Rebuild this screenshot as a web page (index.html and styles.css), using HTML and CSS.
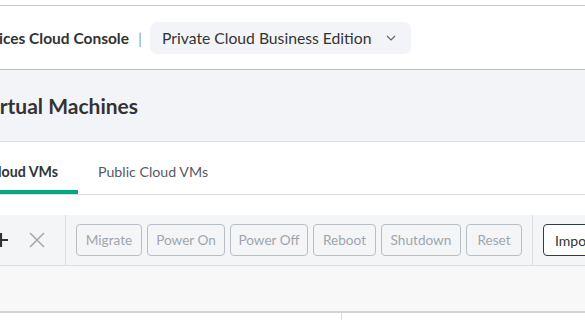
FILE: index.html
```html
<!DOCTYPE html>
<html lang="en">
<head>
<meta charset="utf-8">
<title>Virtual Machines</title>
<link rel="stylesheet" href="styles.css">
</head>
<body>
<div class="topgap"></div>
<header class="appbar">
  <div class="brand"><span>Data Services Cloud Console</span></div>
  <span class="sep">|</span>
  <button class="select">
    <span>Private Cloud Business Edition</span>
    <svg class="chev" width="10" height="6" viewBox="0 0 10 6"><path d="M1 1l4 4 4-4" fill="none" stroke="#666" stroke-width="1.2"/></svg>
  </button>
</header>
<section class="pagehead">
  <div class="title"><h1>Virtual Machines</h1></div>
</section>
<nav class="tabs">
  <a class="tab active"><span>Private Cloud VMs</span></a>
  <a class="tab">Public Cloud VMs</a>
</nav>
<div class="spacer"></div>
<div class="toolbar">
  <div class="icons">
    <svg class="plus" width="16" height="16" viewBox="0 0 16 16"><path d="M8 1v14M1 8h14" stroke="#2f3438" stroke-width="2.2" fill="none"/></svg>
    <svg class="close" width="16" height="16" viewBox="0 0 16 16"><path d="M1 1l14 14M15 1L1 15" stroke="#a4a9ae" stroke-width="1.6" fill="none"/></svg>
  </div>
  <div class="actions">
    <button class="btn" style="width:66px">Migrate</button>
    <button class="btn" style="width:78px">Power On</button>
    <button class="btn" style="width:78px">Power Off</button>
    <button class="btn" style="width:63px">Reboot</button>
    <button class="btn" style="width:80px">Shutdown</button>
    <button class="btn" style="width:56px">Reset</button>
  </div>
  <div class="more">
    <button class="import">Import</button>
  </div>
</div>
<div class="filler"></div>
<div class="tablehead">
  <div class="col1"></div>
  <div class="col2"></div>
</div>
</body>
</html>
```

FILE: styles.css
```css
* { box-sizing: border-box; }
html, body { margin: 0; padding: 0; }
body {
  width: 585px;
  height: 320px;
  overflow: hidden;
  background: #ffffff;
  font-family: Lato, "Noto Sans", sans-serif;
  color: #333333;
}
.topgap {
  height: 6px;
  border-bottom: 1px solid #c6c6c6;
}
.appbar {
  height: 64px;
  display: flex;
  align-items: center;
  border-bottom: 1px solid #bdbdbd;
  background: #fff;
}
.brand {
  width: 129px;
  flex: none;
  display: flex;
  justify-content: flex-end;
  white-space: nowrap;
  font-weight: 700;
  font-size: 15.5px;
  color: #333;
  padding-top: 1px;
}
.sep {
  margin-left: 9px;
  color: #8fa5c0;
  font-size: 16px;
}
.select {
  margin-left: 8px;
  height: 32px;
  width: 261px;
  display: flex;
  align-items: center;
  justify-content: space-between;
  padding: 0 15px 0 12px;
  border: none;
  border-radius: 7px;
  background: #f3f4f7;
  font-family: Lato, "Noto Sans", sans-serif;
  font-size: 15.7px;
  color: #333;
}
.pagehead {
  height: 72px;
  background: #f3f4f7;
  border-bottom: 1px solid #dcdee2;
  display: flex;
  align-items: center;
}
.title {
  width: 138px;
  display: flex;
  justify-content: flex-end;
  white-space: nowrap;
}
.title h1 {
  margin: 0;
  font-size: 21px;
  font-weight: 700;
  color: #333;
}
.tabs {
  height: 53px;
  display: flex;
  border-bottom: 1px solid #dcdcdc;
}
.tab {
  display: flex;
  align-items: center;
  padding: 7px 20px 0;
  font-size: 14.2px;
  color: #555b63;
  white-space: nowrap;
}
.tab.active {
  width: 78px;
  justify-content: flex-end;
  font-weight: 700;
  color: #333;
  border-bottom: 4px solid #01a982;
  padding-top: 11px;
}
.spacer { height: 20px; }
.toolbar {
  height: 51px;
  display: flex;
  background: #f4f5f7;
  border-bottom: 1px solid #dddfe2;
}
.icons {
  width: 66px;
  flex: none;
  display: flex;
  align-items: center;
  justify-content: flex-end;
  gap: 20px;
  padding-right: 20px;
  border-right: 1px solid #dcdee1;
}
.icons svg { flex: none; }
.actions {
  display: flex;
  align-items: center;
  gap: 5px;
  padding: 0 10px;
  border-right: 1px solid #dcdee1;
}
.btn {
  height: 32px;
  padding: 0;
  border: 1px solid #b9bec4;
  border-radius: 4px;
  background: transparent;
  font-family: Lato, "Noto Sans", sans-serif;
  font-size: 13.6px;
  color: #a0a6ad;
}
.more {
  display: flex;
  align-items: center;
  padding-left: 10px;
}
.import {
  height: 32px;
  width: 80px;
  padding: 0 0 0 11px;
  text-align: left;
  border: 1px solid #2f3b4a;
  border-radius: 4px;
  background: #fff;
  font-family: Lato, "Noto Sans", sans-serif;
  font-size: 14px;
  color: #333;
}
.filler {
  height: 47px;
  background: #f8f8f8;
  border-bottom: 2px solid #d3d3d3;
}
.tablehead {
  display: flex;
  height: 10px;
}
.col1 {
  width: 342px;
  border-right: 1px solid #dddddd;
}
```
